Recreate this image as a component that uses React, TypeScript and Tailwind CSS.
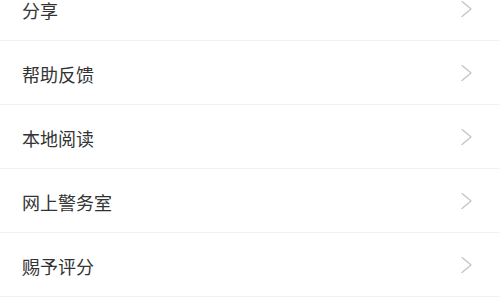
const items = ["分享", "帮助反馈", "本地阅读", "网上警务室", "赐予评分"]

function Chevron() {
  return (
    <svg width="13" height="18" viewBox="0 0 13 18" fill="none" className="shrink-0">
      <path d="M2 1.5 L11 9 L2 16.5" stroke="#c4c4c4" strokeWidth="1.3" strokeLinecap="round" strokeLinejoin="round" />
    </svg>
  )
}

export default function App() {
  return (
    <div
      className="w-[500px] h-[300px] overflow-hidden bg-white"
      style={{ fontFamily: '"Noto Sans CJK SC", "Noto Sans", sans-serif' }}
    >
      <div className="-mt-[23px] flex flex-col">
        {items.map((label) => (
          <div
            key={label}
            className="h-[64px] flex items-center justify-between pl-[22px] pr-[27px] border-b border-[#f2f2f2]"
          >
            <span className="text-[18px] leading-none text-[#333333] pt-[2px]">{label}</span>
            <Chevron />
          </div>
        ))}
      </div>
    </div>
  )
}
